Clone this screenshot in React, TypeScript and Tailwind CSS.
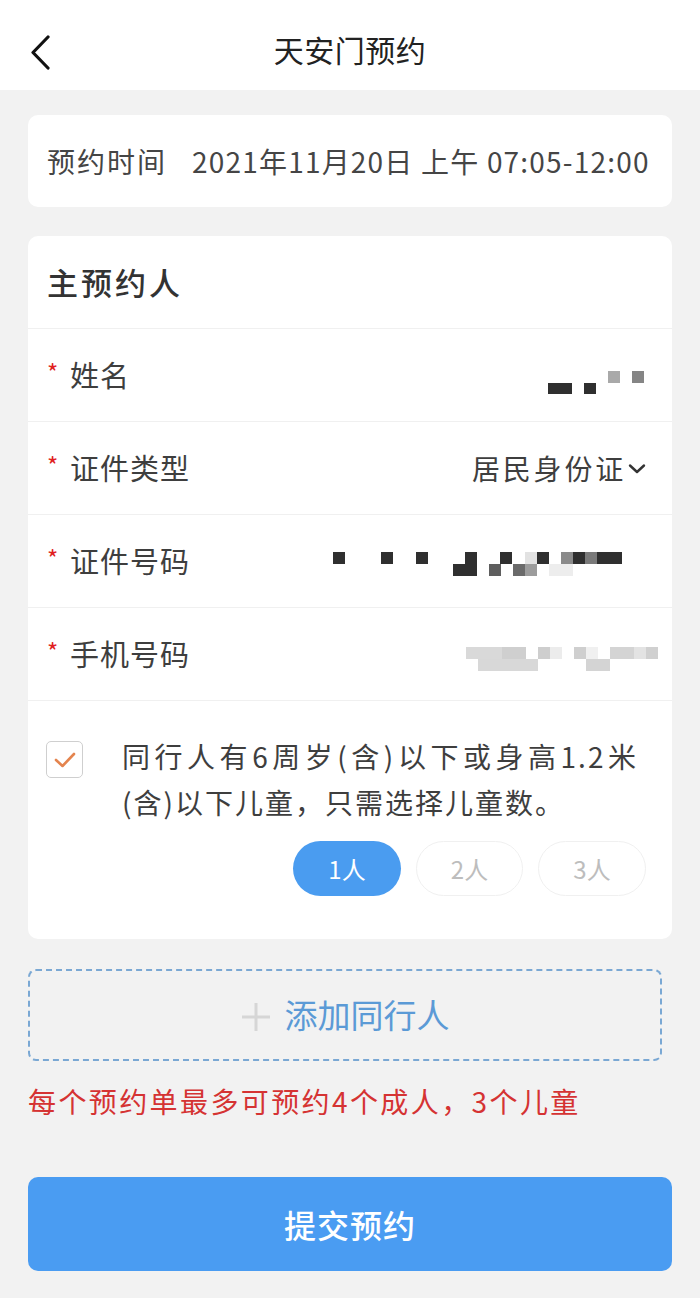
import React from "react";

const Mask = ({ w, h, rects }: { w: number; h: number; rects: [number, number, number, number, string][] }) => (
  <svg width={w} height={h} viewBox={`0 0 ${w} ${h}`}>
    {rects.map(([x, y, rw, rh, c], i) => (
      <rect key={i} x={x} y={y} width={rw} height={rh} fill={c} />
    ))}
  </svg>
);

const Row = ({ label, children }: { label: string; children?: React.ReactNode }) => (
  <div className="relative h-[93px] border-t border-[#f0f0f0] flex items-center pl-[19px] pr-[26px]">
    <span className="text-[#e02020] text-[24px] leading-none w-[23px] mt-[-6px]">*</span>
    <span className="text-[29px] text-[#3e3e3e] tracking-[1px]">{label}</span>
    <div className="flex-1" />
    {children}
  </div>
);

export default function App() {
  const dark = "#2f2f2f";
  return (
    <div className="w-[700px] min-h-[1298px] bg-[#f2f2f2] font-['Noto_Sans_CJK_SC',sans-serif]">
      <div className="relative h-[90px] bg-white flex items-center justify-center">
        <svg className="absolute left-[28px] top-[34px]" width="26" height="36" viewBox="0 0 26 36">
          <path d="M20 3 L5 18.5 L20 34" fill="none" stroke="#111" strokeWidth="3.2" strokeLinecap="round" strokeLinejoin="round" />
        </svg>
        <span className="text-[30px] font-normal text-[#222] mt-[8px] tracking-[0.5px]">天安门预约</span>
      </div>

      <div className="px-[28px] pt-[25px]">
        <div className="h-[92px] rounded-[10px] bg-white flex items-center px-[19px] text-[28px] text-[#454545]">
          <span className="tracking-[2px]">预约时间</span>
          <span className="ml-[25px] tracking-[1.2px]">2021年11月20日 上午 07:05-12:00</span>
        </div>

        <div className="mt-[29px] rounded-[10px] bg-white overflow-hidden">
          <div className="h-[92px] flex items-center px-[19px] text-[31px] font-medium text-[#333] tracking-[3px]">主预约人</div>
          <Row label="姓名">
            <div className="mt-[16px]">
              <Mask
                w={98}
                h={24}
                rects={[
                  [0, 12, 24, 11, dark],
                  [36, 12, 12, 11, dark],
                  [60, 0, 12, 12, "#a9a9a9"],
                  [84, 0, 12, 12, "#858585"],
                ]}
              />
            </div>
          </Row>
          <Row label="证件类型">
            <span className="text-[28px] text-[#3e3e3e] tracking-[2.8px]">居民身份证</span>
            <svg className="ml-[2px] mt-[2px]" width="18" height="12" viewBox="0 0 18 12">
              <path d="M2 2.5 L9 9 L16 2.5" fill="none" stroke="#333" strokeWidth="2.4" strokeLinecap="round" strokeLinejoin="round" />
            </svg>
          </Row>
          <Row label="证件号码">
            <div className="mt-[6px] mr-[24px]">
              <Mask
                w={289}
                h={24}
                rects={[
                  [0, 0, 12, 12, dark],
                  [48, 0, 12, 12, dark],
                  [83, 0, 12, 12, dark],
                  [132, 0, 12, 12, dark],
                  [167, 0, 12, 12, dark],
                  [192, 0, 12, 12, "#e2e2e2"],
                  [204, 0, 12, 12, dark],
                  [228, 0, 12, 12, "#8a8a8a"],
                  [240, 0, 12, 12, dark],
                  [252, 0, 12, 12, "#7a7a7a"],
                  [264, 0, 25, 12, dark],
                  [120, 12, 24, 12, dark],
                  [156, 12, 12, 12, "#5e5e5e"],
                  [180, 12, 12, 12, "#6a6a6a"],
                  [192, 12, 12, 12, "#9c9c9c"],
                  [216, 12, 24, 12, "#ededed"],
                ]}
              />
            </div>
          </Row>
          <Row label="手机号码">
            <div className="mt-[10px] mr-[-12px]">
              <Mask
                w={192}
                h={24}
                rects={[
                  [0, 0, 36, 12, "#d9d9d9"],
                  [36, 0, 24, 12, "#cfcfcf"],
                  [72, 0, 12, 12, "#cecece"],
                  [84, 0, 12, 12, "#ececec"],
                  [108, 0, 12, 12, "#cfcfcf"],
                  [120, 0, 12, 12, "#f0f0f0"],
                  [144, 0, 24, 12, "#d4d4d4"],
                  [168, 0, 12, 12, "#e3e3e3"],
                  [180, 0, 12, 12, "#d0d0d0"],
                  [12, 12, 60, 12, "#d8d8d8"],
                  [120, 12, 24, 12, "#d4d4d4"],
                ]}
              />
            </div>
          </Row>
          <div className="border-t border-[#f0f0f0] pt-[32px] pb-[43px] pl-[18px] pr-[26px]">
            <div className="flex">
              <div className="w-[37px] h-[37px] mt-[8px] rounded-[5px] border border-[#cfcfcf] flex items-center justify-center shrink-0">
                <svg width="24" height="20" viewBox="0 0 24 20">
                  <path d="M3 10 L9.5 16 L21 4" fill="none" stroke="#e4844e" strokeWidth="2.6" strokeLinecap="round" strokeLinejoin="round" />
                </svg>
              </div>
              <div className="ml-[39px] text-[28px] leading-[46px] text-[#3e3e3e]">
                <div className="w-[516px] text-justify [text-align-last:justify] whitespace-nowrap tracking-[2px]">同行人有6周岁(含)以下或身高1.2米</div>
                <div className="tracking-[2px]">(含)以下儿童，只需选择儿童数。</div>
              </div>
            </div>
            <div className="mt-[16px] flex justify-end gap-[15px]">
              <div className="w-[108px] h-[55px] rounded-full bg-[#4a9cf0] text-white text-[24px] flex items-center justify-center">1人</div>
              <div className="w-[107px] h-[55px] rounded-full border border-[#f0f0f0] text-[#bdbdbd] text-[24px] flex items-center justify-center">2人</div>
              <div className="w-[108px] h-[55px] rounded-full border border-[#f0f0f0] text-[#bdbdbd] text-[24px] flex items-center justify-center">3人</div>
            </div>
          </div>
        </div>

        <div className="mt-[30px] mr-[10px] h-[92px] rounded-[8px] border-2 border-dashed border-[#7aa8d4] flex items-center justify-center">
          <svg width="30" height="30" viewBox="0 0 30 30" className="mr-[14px] mt-[4px]">
            <path d="M15 1 V29 M1 15 H29" stroke="#d6d6d6" strokeWidth="3" />
          </svg>
          <span className="text-[33px] text-[#5b9ad6]">添加同行人</span>
        </div>

        <p className="mt-[20px] text-[28px] text-[#d53333] leading-[40px] tracking-[2.4px]">每个预约单最多可预约4个成人，3个儿童</p>

        <div className="mt-[56px] h-[94px] rounded-[10px] bg-[#4a9cf2] flex items-center justify-center">
          <span className="text-[32px] font-medium text-white tracking-[1px]">提交预约</span>
        </div>
      </div>
    </div>
  );
}
